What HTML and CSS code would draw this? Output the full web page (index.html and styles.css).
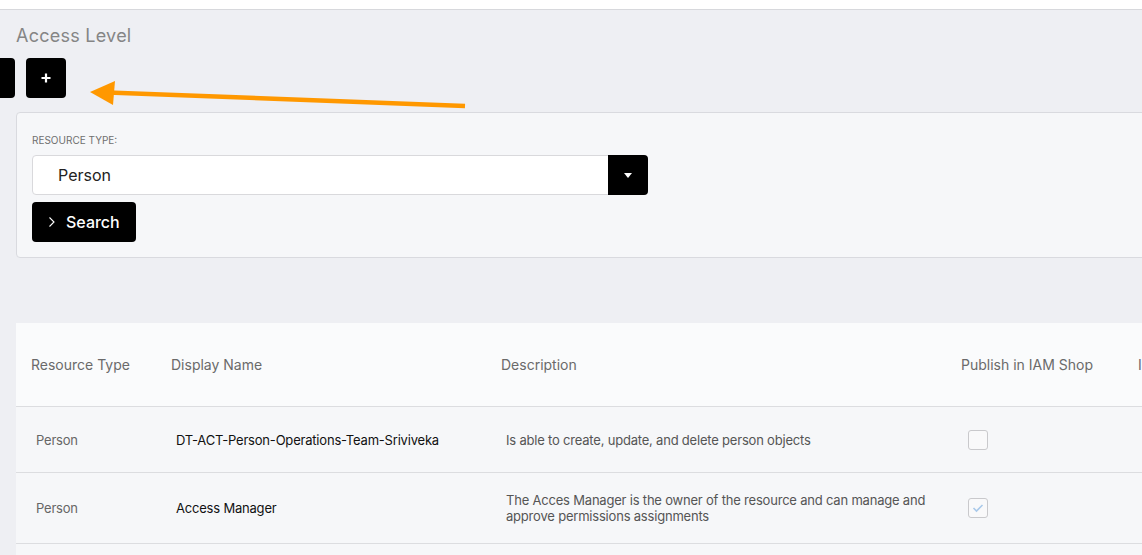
FILE: index.html
```html
<!DOCTYPE html>
<html lang="en">
<head>
    <meta charset="UTF-8">
    <meta name="viewport" content="width=device-width, initial-scale=1.0">
    <title>Access Level</title>
    <link rel="stylesheet" href="styles.css">
</head>
<body>
    <div class="topbar"></div>
    <main class="content">
        <h1 class="page-title">Access Level</h1>

        <div class="toolbar">
            <button class="btn-square btn-back" aria-label="Back"></button>
            <button class="btn-square" aria-label="Add">
                <svg width="12" height="12" viewBox="0 0 12 12"><path d="M6 1.5v9M1.5 6h9" stroke="#fff" stroke-width="2.2"/></svg>
            </button>
        </div>

        <svg class="annotation" width="400" height="40" viewBox="0 0 400 40">
            <line x1="20" y1="12.5" x2="377" y2="26" stroke="#ff9800" stroke-width="4.5"/>
            <polygon points="2,12 27,1 25,25" fill="#ff9800"/>
        </svg>

        <section class="filter-card">
            <div class="field-label">Resource Type:</div>
            <div class="select">
                <span class="select-value">Person</span>
                <span class="select-toggle">
                    <svg width="8" height="5" viewBox="0 0 8 5"><path d="M0 0h8L4 5z" fill="#fff"/></svg>
                </span>
            </div>
            <button class="btn-search">
                <svg width="8" height="12" viewBox="0 0 8 12"><path d="M1.5 1.5 6 6l-4.5 4.5" fill="none" stroke="#fff" stroke-width="1.1"/></svg>
                Search
            </button>
        </section>

        <table class="grid">
            <colgroup>
                <col style="width:140px">
                <col style="width:330px">
                <col style="width:460px">
                <col style="width:177px">
                <col style="width:200px">
            </colgroup>
            <thead>
                <tr>
                    <th>Resource Type</th>
                    <th>Display Name</th>
                    <th>Description</th>
                    <th>Publish in IAM Shop</th>
                    <th>Inherited</th>
                </tr>
            </thead>
            <tbody>
                <tr>
                    <td class="type">Person</td>
                    <td class="name">DT-ACT-Person-Operations-Team-Sriviveka</td>
                    <td class="desc">Is able to create, update, and delete person objects</td>
                    <td><span class="check"></span></td>
                    <td></td>
                </tr>
                <tr>
                    <td class="type">Person</td>
                    <td class="name">Access Manager</td>
                    <td class="desc">The Acces Manager is the owner of the resource and can manage and approve permissions assignments</td>
                    <td>
                        <span class="check">
                            <svg width="12" height="10" viewBox="0 0 12 10"><path d="M1.5 5 4.5 8 10.5 2" fill="none" stroke="#a9c9ea" stroke-width="1.6"/></svg>
                        </span>
                    </td>
                    <td></td>
                </tr>
                <tr>
                    <td class="type">Person</td>
                    <td class="name"></td>
                    <td class="desc"></td>
                    <td></td>
                    <td></td>
                </tr>
            </tbody>
        </table>
    </main>
</body>
</html>
```

FILE: styles.css
```css
body {
    margin: 0;
    font-family: Inter, "Noto Sans", sans-serif;
    background-color: #eeeff3;
    overflow: hidden;
    width: 1142px;
    height: 555px;
}
.topbar {
    height: 9px;
    background-color: #fff;
    border-bottom: 1px solid #d7d8dc;
}
.content {
    position: relative;
    padding: 14px 0 0 16px;
    border-left: 2px solid #e4e5e9;
    margin-left: -2px;
    width: 1400px;
}
.page-title {
    margin: 0;
    font-size: 18px;
    line-height: 24px;
    font-weight: 400;
    letter-spacing: 0.25px;
    color: #858585;
}
.toolbar {
    display: flex;
    gap: 11px;
    margin-top: 10px;
}
.btn-square {
    width: 40px;
    height: 40px;
    border: 0;
    border-radius: 4px;
    background-color: #000;
    display: flex;
    align-items: center;
    justify-content: center;
    padding: 0;
}
.btn-back {
    margin-left: -41px;
}
.annotation {
    position: absolute;
    left: 88px;
    top: 70px;
}
.filter-card {
    margin-top: 14px;
    width: 1300px;
    background-color: #f6f7f9;
    border: 1px solid #d9dadf;
    border-radius: 4px;
    padding: 21px 15px 15px 15px;
}
.field-label {
    font-size: 10px;
    line-height: 12px;
    text-transform: uppercase;
    color: #6f6f6f;
    margin-bottom: 9px;
}
.select {
    width: 616px;
    height: 40px;
    box-sizing: border-box;
    display: flex;
    align-items: center;
    justify-content: space-between;
    background-color: #fff;
    border: 1px solid #d9d9dc;
    border-radius: 4px;
}
.select-value {
    padding-left: 25px;
    font-size: 16px;
    color: #222;
}
.select-toggle {
    width: 40px;
    height: 40px;
    margin-right: -1px;
    background-color: #000;
    border-radius: 0 4px 4px 0;
    display: flex;
    align-items: center;
    justify-content: center;
}
.btn-search {
    margin-top: 7px;
    height: 40px;
    width: 104px;
    border: 0;
    border-radius: 4px;
    background-color: #000;
    color: #fff;
    font-family: inherit;
    font-size: 16px;
    font-weight: 500;
    display: flex;
    align-items: center;
    gap: 10px;
    padding: 0 0 0 16px;
}
.grid {
    margin-top: 65px;
    width: 1307px;
    table-layout: fixed;
    border-collapse: collapse;
    background-color: #f6f7f9;
}
.grid th {
    height: 83px;
    padding: 0 15px;
    text-align: left;
    font-size: 14px;
    font-weight: 400;
    color: #6a6a6a;
    background-color: #fafbfc;
    border-bottom: 1px solid #dcdde0;
    white-space: nowrap;
}
.grid td {
    height: 27px;
    padding: 19px 20px;
    font-size: 13px;
    line-height: 16px;
    letter-spacing: -0.2px;
    border-bottom: 1px solid #dcdde0;
    vertical-align: middle;
}
.grid .type {
    color: #666;
}
.grid .name {
    color: #111;
}
.grid .desc {
    color: #555;
}
.check {
    display: flex;
    align-items: center;
    justify-content: center;
    width: 20px;
    height: 20px;
    box-sizing: border-box;
    margin-left: 2px;
    border: 1px solid #c9c9cc;
    border-radius: 3px;
    background-color: #f9f9fa;
}
```
